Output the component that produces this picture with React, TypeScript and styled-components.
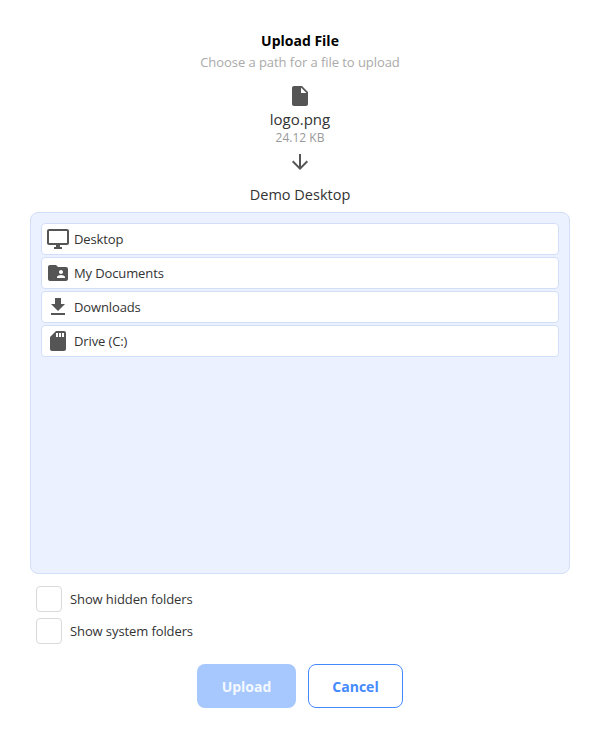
import * as React from "react"
import styled, { createGlobalStyle } from "styled-components"

const GlobalStyle = createGlobalStyle`
  html, body {
    margin: 0;
    padding: 0;
    background: #fff;
    font-family: "Open Sans", "Noto Sans", sans-serif;
  }
`

const ICONS = {
  file: "M6 2c-1.1 0-1.99.9-1.99 2L4 20c0 1.1.89 2 1.99 2H18c1.1 0 2-.9 2-2V8l-6-6H6zm7 7V3.5L18.5 9H13z",
  arrow: "M20 12l-1.41-1.41L13 16.17V4h-2v12.17l-5.58-5.59L4 12l8 8 8-8z",
  desktop: "M21 2H3c-1.1 0-2 .9-2 2v12c0 1.1.9 2 2 2h7v2H8v2h8v-2h-2v-2h7c1.1 0 2-.9 2-2V4c0-1.1-.9-2-2-2zm0 14H3V4h18v12z",
  documents: "M20 6h-8l-2-2H4c-1.1 0-1.99.9-1.99 2L2 18c0 1.1.9 2 2 2h16c1.1 0 2-.9 2-2V8c0-1.1-.9-2-2-2zm-5 3c1.1 0 2 .9 2 2s-.9 2-2 2-2-.9-2-2 .9-2 2-2zm4 8h-8v-1c0-1.33 2.67-2 4-2s4 .67 4 2v1z",
  downloads: "M19 9h-4V3H9v6H5l7 7 7-7zM5 18v2h14v-2H5z",
  drive: "M18 2h-8L4.02 8 4 20c0 1.1.9 2 2 2h12c1.1 0 2-.9 2-2V4c0-1.1-.9-2-2-2zm-6 6h-2V4h2v4zm3 0h-2V4h2v4zm3 0h-2V4h2v4z",
}

const Icon: React.FunctionComponent<{ name: keyof typeof ICONS }> = ({ name }) => (
  <IconSvg viewBox="0 0 24 24">
    <path d={ICONS[name]} />
  </IconSvg>
)

const folders: { name: string; icon: keyof typeof ICONS }[] = [
  { name: "Desktop", icon: "desktop" },
  { name: "My Documents", icon: "documents" },
  { name: "Downloads", icon: "downloads" },
  { name: "Drive (C:)", icon: "drive" },
]

const App: React.FunctionComponent = () => (
  <Dialog>
    <GlobalStyle />
    <Title>Upload File</Title>
    <Subtitle>Choose a path for a file to upload</Subtitle>
    <Icon name="file" />
    <FileName>logo.png</FileName>
    <FileSize>24.12 KB</FileSize>
    <Icon name="arrow" />
    <Target>Demo Desktop</Target>
    <Browser>
      {folders.map((f) => (
        <Row key={f.name}>
          <Icon name={f.icon} />
          <RowLabel>{f.name}</RowLabel>
        </Row>
      ))}
    </Browser>
    <Options>
      <Option>
        <Box />
        Show hidden folders
      </Option>
      <Option>
        <Box />
        Show system folders
      </Option>
    </Options>
    <Actions>
      <UploadButton>Upload</UploadButton>
      <CancelButton>Cancel</CancelButton>
    </Actions>
  </Dialog>
)

const Dialog = styled.main`
  box-sizing: border-box;
  width: 599px;
  height: 738px;
  padding: 32px 29px 0 30px;
  display: flex;
  flex-direction: column;
  align-items: center;
  overflow: hidden;
`

const IconSvg = styled.svg`
  width: 24px;
  height: 24px;
  flex: none;
  display: block;
  fill: #555;
`

const Title = styled.h1`
  margin: 0;
  font-size: 14px;
  line-height: 18px;
  font-weight: 700;
  color: #000;
`

const Subtitle = styled.p`
  margin: 3px 0 13px;
  font-size: 13px;
  line-height: 18px;
  letter-spacing: -0.06px;
  color: #aaa;
`

const FileName = styled.div`
  margin-top: 1px;
  font-size: 15px;
  line-height: 20px;
  color: #333;
`

const FileSize = styled.div`
  margin: 1px 0 4px;
  font-size: 12px;
  line-height: 16px;
  color: #999;
`

const Target = styled.div`
  margin: 10px 0 6px;
  font-size: 14.5px;
  line-height: 22px;
  color: #333;
`

const Browser = styled.section`
  box-sizing: border-box;
  align-self: stretch;
  height: 362px;
  padding: 10px;
  display: flex;
  flex-direction: column;
  gap: 2px;
  background: #ebf1fe;
  border: 1px solid #d3dff8;
  border-radius: 8px;
`

const Row = styled.div`
  box-sizing: border-box;
  height: 32px;
  padding: 0 4px;
  display: flex;
  align-items: center;
  gap: 4px;
  background: #fff;
  border: 1px solid #d3dff8;
  border-radius: 4px;
`

const RowLabel = styled.span`
  font-size: 13px;
  letter-spacing: -0.12px;
  color: #333;
`

const Options = styled.div`
  align-self: stretch;
  margin-top: 12px;
  padding-left: 6px;
  display: flex;
  flex-direction: column;
  gap: 6px;
`

const Option = styled.label`
  display: flex;
  align-items: center;
  gap: 8px;
  font-size: 13px;
  letter-spacing: -0.1px;
  color: #333;
`

const Box = styled.span`
  box-sizing: border-box;
  width: 26px;
  height: 26px;
  background: #fff;
  border: 1px solid #d9d9d9;
  border-radius: 4px;
`

const Actions = styled.div`
  margin-top: 20px;
  display: flex;
  gap: 12px;
`

const UploadButton = styled.button`
  width: 99px;
  height: 44px;
  padding: 0;
  font-family: inherit;
  font-size: 14px;
  font-weight: 700;
  color: #f4f8ff;
  background: #a6c8ff;
  border: 0;
  border-radius: 8px;
`

const CancelButton = styled(UploadButton)`
  width: 95px;
  color: #448aff;
  background: #fff;
  border: 1px solid #448aff;
`

export default App
